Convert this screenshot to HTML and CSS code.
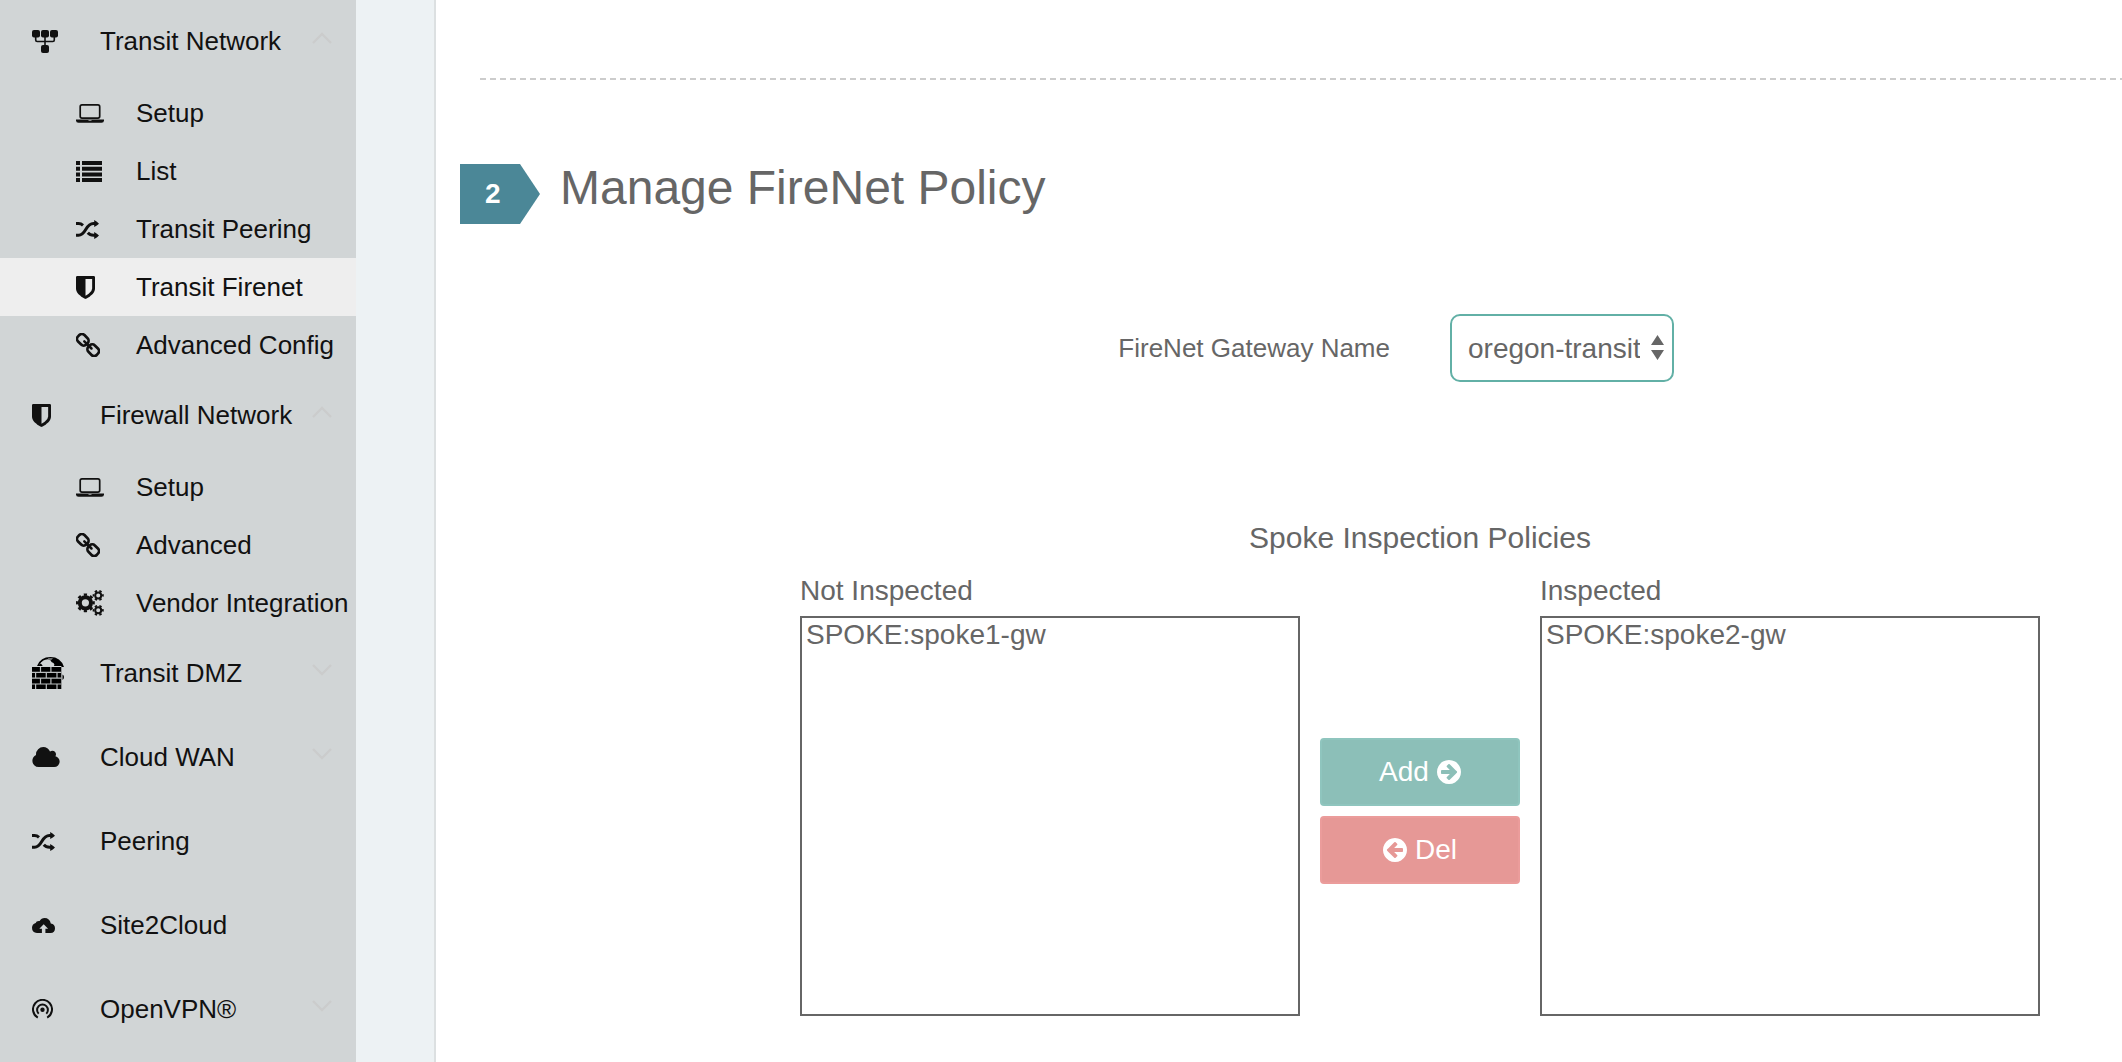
FILE: index.html
```html
<!DOCTYPE html>
<html lang="en">
<head>
<meta charset="utf-8">
<title>Transit FireNet</title>
<meta name="viewport" content="width=device-width, initial-scale=1">
<link rel="stylesheet" href="styles.css">
</head>
<body>
<svg class="sprite" aria-hidden="true">
  <symbol id="sitemap" viewBox="0 0 26 23">
    <rect x="0" y="0" width="8" height="7.500" rx="2"/><rect x="9" y="0" width="8" height="7.500" rx="2"/><rect x="18" y="0" width="8" height="7.500" rx="2"/><rect x="9" y="15" width="8" height="8" rx="2"/>
    <path d="M3.700 6v4q0 1.500 1.500 1.500h15.600q1.500 0 1.500-1.500V6M13 6v10" fill="none" stroke="currentColor" stroke-width="1.600"/>
  </symbol>
  <symbol id="laptop" viewBox="0 0 28 19">
    <rect x="4.200" y=".9" width="19.500" height="13.200" rx="1.800" fill="none" stroke="currentColor" stroke-width="1.700"/>
    <path d="M0 15.400h28v1q0 2.300-2.500 2.300h-23q-2.500 0-2.500-2.300z"/><path d="M12.500 16.400h3" stroke="#d1d5d6" stroke-width=".7"/>
  </symbol>
  <symbol id="list" viewBox="0 0 26 21">
    <path d="M0 0h4v4H0zM6 0h20v4H6zM0 5.700h4v4H0zM6 5.700h20v4H6zM0 11.400h4v4H0zM6 11.400h20v4H6zM0 17h4v4H0zM6 17h20v4H6z"/>
  </symbol>
  <symbol id="shuffle" viewBox="0 0 23 19">
    <path d="M0 3.500h2.500Q5 3.500 7 5.300M0 15.200h2.500c8 0 6.500-11.700 15-11.700H20M11.800 12.700q2.200 2.500 5.700 2.500H20" fill="none" stroke="currentColor" stroke-width="3"/>
    <path d="M18.200 0q3 1.500 4.800 3.700-2 2-4.800 3.300zM18.200 11.900q3 1.500 4.800 3.500-2 2-4.800 3.500z"/>
  </symbol>
  <symbol id="shield" viewBox="256 128 1280 1536">
    <path d="M1344 960V320H896v1137q119-63 213-137 235-184 235-360zm192-768v768q0 86-33.500 170.500t-83 150-118 127.500-126.500 103-121 77.500-89.500 49.500-42.500 20q-12 6-26 6t-26-6q-16-7-42.500-20t-89.500-49.500-121-77.500-126.500-103-118-127.500-83-150T256 960V192q0-26 19-45t45-19h1152q26 0 45 19t19 45z"/>
  </symbol>
  <symbol id="chain" viewBox="0 0 24 24">
    <g fill="none" stroke="currentColor" stroke-width="2.700">
      <rect x="1" y="2.300" width="11.600" height="9" rx="3.600" transform="rotate(45 6.800 6.800)"/>
      <rect x="11.400" y="12.700" width="11.600" height="9" rx="3.600" transform="rotate(45 17.200 17.200)"/>
      <path d="M8.300 8.300l7.200 7.200" stroke-width="2.500" stroke-linecap="round"/>
    </g>
  </symbol>
  <symbol id="cogs" viewBox="0 0 28 26">
    <g fill="none" stroke="currentColor">
      <circle cx="9.400" cy="12.800" r="5.600" stroke-width="4"/>
      <circle cx="9.400" cy="12.800" r="8.200" stroke-width="2.400" pathLength="16" stroke-dasharray="1 1" stroke-dashoffset=".5"/>
      <circle cx="22.200" cy="5.400" r="3" stroke-width="2"/>
      <circle cx="22.200" cy="5.400" r="4.700" stroke-width="1.700" pathLength="12" stroke-dasharray="1 1" stroke-dashoffset=".5"/>
      <circle cx="22.200" cy="20.300" r="3" stroke-width="2"/>
      <circle cx="22.200" cy="20.300" r="4.700" stroke-width="1.700" pathLength="12" stroke-dasharray="1 1" stroke-dashoffset=".5"/>
    </g>
  </symbol>
  <symbol id="firewall" viewBox="0 0 32 32">
    <path d="M5 9Q8.500.1 18.500.1T32 10h-2.600V8.900h-7.600q1.500-1.500-.8-3.200-2-.5-2.200-2.200l-3-1.300q-5.500.8-6.800 3.800L11 9z" fill="#000"/>
    <path d="M7 7.700q2.500-3.400 5.200-3.200 4.500.3 8 4.500H11L9 6.600z" fill="#d1d5d6"/><path d="M16 1.400h5l-1.500 1h-3z" fill="#d1d5d6"/>
    <path d="M0 10h29.300v22H0z" fill="#000"/>
    <path d="M0 15.400h29.300M0 21.200h29.300M0 27h29.300M8.500 10v5.400M18.900 10v5.400M3.600 15.400v5.800M14.300 15.400v5.800M25 15.400v5.800M8.500 21.200V27M18.900 21.200V27M3.600 27v5M14.300 27v5M25 27v5" fill="none" stroke="#b9bdbe" stroke-width="1.200"/>
    <path d="M30.500 17.500q1.500.5 1.500 2.500t-1.500 3z" fill="#000"/>
  </symbol>
  <symbol id="cloud" viewBox="64 128 1920 1408">
    <path d="M1984 1152q0 159-112.500 271.500T1600 1536H512q-185 0-316.500-131.500T64 1088q0-132 71-241.500T322 683q-2-28-2-43 0-212 150-362t362-150q158 0 286.500 88T1306 446q70-62 166-62 106 0 181 75t75 181q0 75-41 138 129 30 213 134.500t84 239.500z"/>
  </symbol>
  <symbol id="upload" viewBox="0 0 23 15">
    <path d="M9.900 15H5Q0 14.700 0 9.800 0 6 3.700 4.900 4.200 2.800 7.600 3.100 9.300 0 12.600 0q5 0 6.200 5.500Q23 6.200 23 10.200q0 4.500-4.500 4.800h-5.100v-4.300h2.700L11.700 6.300l-4.400 4.400h2.600z"/>
  </symbol>
  <symbol id="podcast" viewBox="0 0 21 20">
    <g fill="none" stroke="currentColor" stroke-width="2"><path d="M5.800 18.600a9.500 9.500 0 1 1 9.400 0M6.700 14.800a5.400 5.400 0 1 1 7.600 0"/></g><circle cx="10.500" cy="10.700" r="2.200"/>
  </symbol>
  <symbol id="up" viewBox="0 0 20 12"><path d="M1 11l9-9 9 9" fill="none" stroke="currentColor" stroke-width="2.400"/></symbol>
  <symbol id="down" viewBox="0 0 20 12"><path d="M1 1l9 9 9-9" fill="none" stroke="currentColor" stroke-width="2.400"/></symbol>
  <symbol id="arrow-circle" viewBox="128 128 1536 1536">
    <path d="M1413 896q0-27-18-45l-91-91-362-362q-18-18-45-18t-45 18l-91 91q-18 18-18 45t18 45l189 189H448q-26 0-45 19t-19 45v128q0 26 19 45t45 19h502l-189 189q-19 19-19 45t19 45l91 91q18 18 45 18t45-18l362-362 91-91q18-18 18-45zm251 0q0 209-103 385.500T1281.500 1561 896 1664t-385.500-103T231 1281.500 128 896t103-385.500T510.500 231 896 128t385.500 103T1561 510.500 1664 896z" transform="translate(0 0)"/>
  </symbol>
</svg>
<div class="layout">
  <nav class="sidebar" aria-label="Main">
    <button class="group" type="button" aria-expanded="true"><span class="slot"><svg width="26" height="23"><use href="#sitemap"/></svg></span>Transit Network<svg class="chevron" width="20" height="12"><use href="#up"/></svg></button>
    <a class="item" href="#"><span class="slot"><svg width="28" height="19"><use href="#laptop"/></svg></span>Setup</a>
    <a class="item" href="#"><span class="slot"><svg width="26" height="21"><use href="#list"/></svg></span>List</a>
    <a class="item" href="#"><span class="slot"><svg width="23" height="19"><use href="#shuffle"/></svg></span>Transit Peering</a>
    <a class="item active" href="#" aria-current="page"><span class="slot"><svg width="19" height="23"><use href="#shield"/></svg></span>Transit Firenet</a>
    <a class="item" href="#"><span class="slot"><svg width="24" height="24"><use href="#chain"/></svg></span>Advanced Config</a>
    <button class="group" type="button" aria-expanded="true"><span class="slot"><svg width="19" height="23"><use href="#shield"/></svg></span>Firewall Network<svg class="chevron" width="20" height="12"><use href="#up"/></svg></button>
    <a class="item" href="#"><span class="slot"><svg width="28" height="19"><use href="#laptop"/></svg></span>Setup</a>
    <a class="item" href="#"><span class="slot"><svg width="24" height="24"><use href="#chain"/></svg></span>Advanced</a>
    <a class="item" href="#"><span class="slot"><svg width="28" height="26"><use href="#cogs"/></svg></span>Vendor Integration</a>
    <button class="group" type="button" aria-expanded="false"><span class="slot"><svg width="32" height="32"><use href="#firewall"/></svg></span>Transit DMZ<svg class="chevron" width="20" height="12"><use href="#down"/></svg></button>
    <button class="group" type="button" aria-expanded="false"><span class="slot"><svg width="28" height="20"><use href="#cloud"/></svg></span>Cloud WAN<svg class="chevron" width="20" height="12"><use href="#down"/></svg></button>
    <a class="group" href="#"><span class="slot"><svg width="23" height="19"><use href="#shuffle"/></svg></span>Peering</a>
    <a class="group" href="#"><span class="slot"><svg width="23" height="15"><use href="#upload"/></svg></span>Site2Cloud</a>
    <button class="group" type="button" aria-expanded="false"><span class="slot"><svg width="21" height="20"><use href="#podcast"/></svg></span>OpenVPN®<svg class="chevron" width="20" height="12"><use href="#down"/></svg></button>
  </nav>
  <main class="panel">
    <div class="divider" role="separator"></div>
    <header class="step">
      <span class="step-number">2</span>
      <h1 class="step-title">Manage FireNet Policy</h1>
    </header>
    <form class="policy">
      <div class="gateway">
        <label class="gateway-label" for="gateway">FireNet Gateway Name</label>
        <div class="select-wrap">
          <select class="select" id="gateway"><option>oregon-transit</option></select>
          <svg class="select-arrows" width="13" height="25" viewBox="0 0 13 25" aria-hidden="true"><path d="M6.500 0L13 10H0zM6.500 25L13 15H0z"/></svg>
        </div>
      </div>
      <h2 class="policy-title">Spoke Inspection Policies</h2>
      <div class="transfer">
        <div class="column">
          <label class="column-label" for="not-inspected">Not Inspected</label>
          <select class="listbox" id="not-inspected" multiple><option>SPOKE:spoke1-gw</option></select>
        </div>
        <div class="actions">
          <button class="button add" type="button">Add <svg width="24" height="24"><use href="#arrow-circle"/></svg></button>
          <button class="button del" type="button"><svg class="flip" width="24" height="24"><use href="#arrow-circle"/></svg> Del</button>
        </div>
        <div class="column">
          <label class="column-label" for="inspected">Inspected</label>
          <select class="listbox" id="inspected" multiple><option>SPOKE:spoke2-gw</option></select>
        </div>
      </div>
    </form>
  </main>
</div>
</body>
</html>
```
FILE: styles.css
```css
*, *::before, *::after { box-sizing: border-box; }

body {
  margin: 0;
  background: #edf2f4;
  color: #666;
  font-family: "Liberation Sans", Arial, Helvetica, sans-serif;
  font-size: 28px;
}

button, select { font: inherit; color: inherit; }
svg { fill: currentColor; flex: none; }
.sprite { position: absolute; width: 0; height: 0; }

.layout { display: flex; min-height: 100vh; }

/* Sidebar */
.sidebar {
  flex: none;
  width: 356px;
  background: #d1d5d6;
  color: #111;
  font-size: 26px;
}

.group, .item {
  display: flex;
  align-items: center;
  width: 100%;
  border: 0;
  background: none;
  color: inherit;
  font-size: 26px;
  line-height: 30px;
  text-align: left;
  text-decoration: none;
  white-space: nowrap;
}

.group { height: 84px; padding: 0 24px 2px 32px; }
.item { height: 58px; padding: 0 0 0 76px; }
.item.active { background: #eee; }

.slot { display: flex; flex: none; width: 68px; }
.item .slot { width: 60px; }
.chevron { margin: 0 0 6px auto; color: #cbcccc; }

/* Main panel */
.panel {
  flex: 1;
  min-width: 0;
  margin-left: 78px;
  padding-top: 78px;
  border-left: 2px solid #dce0e1;
  background: #fff;
}

.divider {
  height: 2px;
  margin-left: 44px;
  background: repeating-linear-gradient(90deg, #ccc 0 6px, transparent 6px 10px);
}

.step { display: flex; align-items: flex-start; gap: 20px; margin: 84px 0 0 24px; }

.step-number {
  flex: none;
  width: 80px;
  padding-left: 25px;
  background: #4b8797;
  clip-path: polygon(0 0, 60px 0, 100% 50%, 60px 100%, 0 100%);
  color: #fff;
  font-weight: 700;
  line-height: 60px;
}

.step-title { margin: 0; font-size: 48px; font-weight: 400; line-height: 48px; }

.policy { padding: 90px 0 46px 282px; }

.gateway { display: grid; grid-template-columns: 1fr 1fr; gap: 60px; align-items: center; }
.gateway-label { font-size: 26px; text-align: right; }

.select-wrap { position: relative; width: 224px; }
.select {
  width: 100%;
  height: 68px;
  padding: 0 32px 0 16px;
  border: 2px solid #62b0a6;
  border-radius: 10px;
  background: #fff;
  appearance: none;
}
.select-arrows { position: absolute; top: 21px; right: 10px; pointer-events: none; }

.policy-title {
  margin: 138px 0 0;
  font-size: 30px;
  font-weight: 400;
  line-height: 36px;
  text-align: center;
}

.transfer { display: flex; justify-content: center; gap: 20px; margin-top: 18px; }
.column { display: flex; flex: 0 1 500px; flex-direction: column; min-width: 0; }
.column-label { line-height: 34px; margin-bottom: 8px; }

.listbox {
  width: 100%;
  height: 400px;
  padding: 0;
  border: 2px solid #666;
  border-radius: 0;
  background: #fff;
  overflow: hidden;
}
.listbox option { padding: 1px 4px 0; }

.actions {
  display: flex;
  flex: none;
  flex-direction: column;
  gap: 10px;
  width: 200px;
  padding-top: 164px;
}

.button {
  display: flex;
  align-items: center;
  justify-content: center;
  gap: 8px;
  height: 68px;
  padding: 0;
  border: 2px solid;
  border-radius: 4px;
  color: #fff;
}
.add { border-color: #8fc5be; background: #8cbfb8; }
.del { border-color: #eb9c9b; background: #e69896; }
.flip { transform: scaleX(-1); }
```
